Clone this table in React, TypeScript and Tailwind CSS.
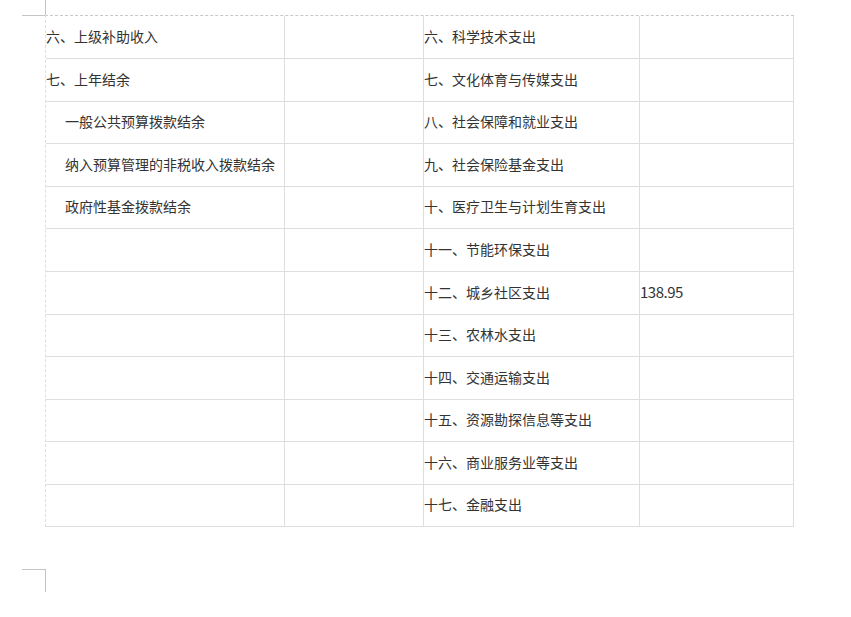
import React from "react";

const rows = [
  { a: "六、上级补助收入", indent: false, c: "六、科学技术支出", d: "", tall: true },
  { a: "七、上年结余", indent: false, c: "七、文化体育与传媒支出", d: "", tall: true },
  { a: "一般公共预算拨款结余", indent: true, c: "八、社会保障和就业支出", d: "", tall: false },
  { a: "纳入预算管理的非税收入拨款结余", indent: true, c: "九、社会保险基金支出", d: "", tall: true },
  { a: "政府性基金拨款结余", indent: true, c: "十、医疗卫生与计划生育支出", d: "", tall: false },
  { a: "", indent: false, c: "十一、节能环保支出", d: "", tall: true },
  { a: "", indent: false, c: "十二、城乡社区支出", d: "138.95", tall: true },
  { a: "", indent: false, c: "十三、农林水支出", d: "", tall: false },
  { a: "", indent: false, c: "十四、交通运输支出", d: "", tall: true },
  { a: "", indent: false, c: "十五、资源勘探信息等支出", d: "", tall: false },
  { a: "", indent: false, c: "十六、商业服务业等支出", d: "", tall: true },
  { a: "", indent: false, c: "十七、金融支出", d: "", tall: false },
];

const App = () => {
  return (
    <div
      className="w-[851px] h-[617px] bg-white text-[14px] text-[#333] overflow-hidden"
      style={{ fontFamily: '"Noto Sans CJK SC", "Noto Sans", sans-serif' }}
    >
      <div className="h-[15px] pl-[45px]">
        <div className="w-px h-full bg-[#c4c4c4]" />
      </div>
      <div className="flex items-start">
        <div className="ml-[22px] w-[23px] h-px bg-[#c4c4c4]" />
        <div className="w-[749px] border-t border-dashed border-t-[#c8c8c8] border-l border-l-[#dedede]">
          {rows.map((row, i) => (
            <div
              key={i}
              className={`flex border-b border-[#dedede] ${row.tall ? "h-[43px]" : "h-[42px]"}`}
            >
              <div
                className={`w-[239px] shrink-0 border-r border-[#dedede] flex items-center pb-[2px] whitespace-nowrap ${
                  row.indent ? "pl-[19px]" : "pl-0"
                }`}
              >
                {row.a}
              </div>
              <div className="w-[139px] shrink-0 border-r border-[#dedede]" />
              <div className="w-[216px] shrink-0 border-r border-[#dedede] flex items-center pb-[2px] whitespace-nowrap">
                {row.c}
              </div>
              <div className="w-[154px] shrink-0 border-r border-[#dedede] flex items-center pb-[2px] text-[15px] tracking-[-0.5px]">
                {row.d}
              </div>
            </div>
          ))}
        </div>
      </div>
      <div className="mt-[42px] flex items-start">
        <div className="ml-[22px] w-[23px] h-px bg-[#c4c4c4]" />
        <div className="w-px h-[23px] bg-[#c4c4c4]" />
      </div>
    </div>
  );
};

export default App;
